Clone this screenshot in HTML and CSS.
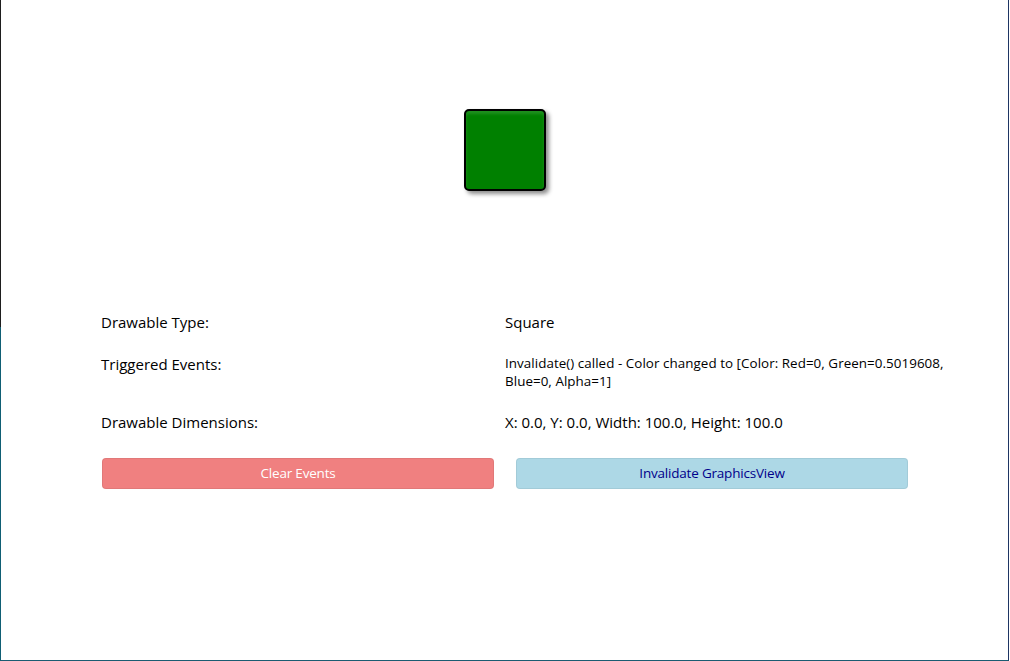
FILE: index.html
```html
<!DOCTYPE html>
<html>
<head>
<meta charset="utf-8">
<link rel="stylesheet" href="styles.css">
</head>
<body>
<div class="window">
  <div class="canvas">
    <div class="square"></div>
  </div>
  <div class="info">
    <div class="label r1">Drawable Type:</div>
    <div class="value r1">Square</div>
    <div class="label r2">Triggered Events:</div>
    <div class="value small r2">Invalidate() called - Color changed to [Color: Red=0, Green=0.5019608, Blue=0, Alpha=1]</div>
    <div class="label r3">Drawable Dimensions:</div>
    <div class="value r3">X: 0.0, Y: 0.0, Width: 100.0, Height: 100.0</div>
  </div>
  <div class="buttons">
    <button class="btn clear">Clear Events</button>
    <button class="btn invalidate">Invalidate GraphicsView</button>
  </div>
</div>
</body>
</html>
```
FILE: styles.css
```css
html, body {
  margin: 0;
  padding: 0;
  background: #ffffff;
}
body {
  font-family: "Open Sans", "Noto Sans", sans-serif;
  color: #000;
}
.window {
  width: 1009px;
  height: 661px;
  box-sizing: border-box;
  border-left: 1px solid #0f5e74;
  border-right: 1px solid #1e3563;
  border-bottom: 1px solid #1a5c72;
  background: #fff;
  position: relative;
  display: flex;
  flex-direction: column;
}
.window::before {
  content: "";
  position: absolute;
  left: -1px;
  top: 0;
  width: 1px;
  height: 327px;
  background: #1e1e1e;
}
.canvas {
  height: 300px;
  display: flex;
  align-items: center;
  justify-content: center;
  padding-left: 1px;
}
.square {
  width: 78px;
  height: 78px;
  background: #008000;
  border: 2px solid #000;
  border-radius: 5px;
  box-shadow: 3px 3px 4px rgba(0,0,0,0.45), inset 0 3px 3px rgba(255,255,255,0.12);
}
.info {
  display: grid;
  grid-template-columns: 404px 460px;
  margin-left: 100px;
  margin-top: 12px;
}
.label, .value {
  font-size: 15px;
  line-height: 20px;
  letter-spacing: 0;
}
.small {
  font-size: 13.4px;
  line-height: 18px;
  letter-spacing: 0.05px;
}
.r1 { height: 42px; }
.r2 { height: 58px; }
.r3 { height: 20px; }
.buttons {
  display: grid;
  grid-template-columns: 392px 392px;
  column-gap: 22px;
  margin-left: 101px;
  margin-top: 26px;
}
.btn {
  height: 31px;
  border: 1px solid rgba(0,0,0,0.06);
  border-radius: 4px;
  font-family: "Open Sans", "Noto Sans", sans-serif;
  font-size: 13.5px;
  letter-spacing: -0.2px;
  padding: 0 0 2px 0;
  cursor: pointer;
}
.clear {
  background: #f08080;
  color: #ffffff;
}
.invalidate {
  background: #add8e6;
  color: #00008b;
}
```
